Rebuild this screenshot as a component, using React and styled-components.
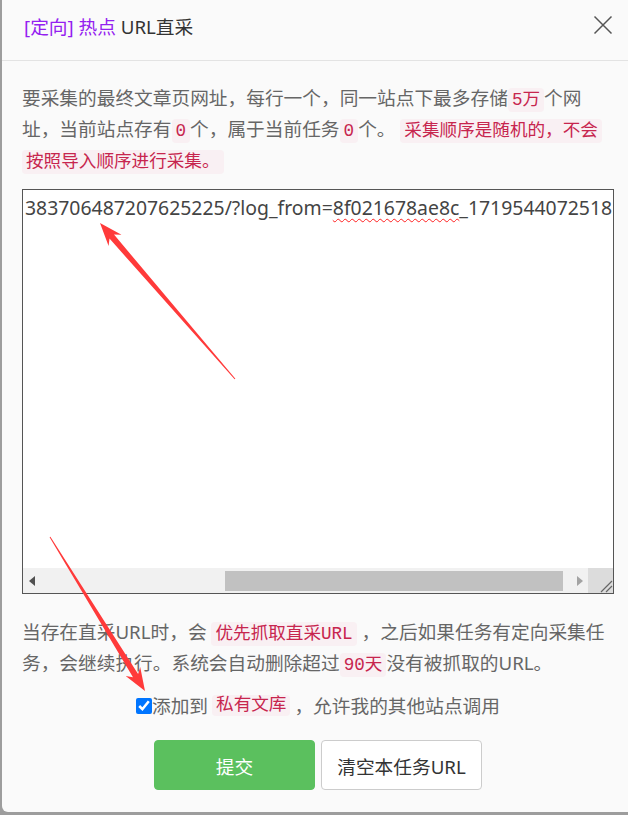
import React from "react";
import styled, { createGlobalStyle } from "styled-components";

const Global = createGlobalStyle`
  html, body {
    margin: 0;
    padding: 0;
    overflow: hidden;
    background: #9a9a9a;
  }
`;

const Page = styled.div`
  position: relative;
  width: 628px;
  height: 815px;
  overflow: hidden;
  padding-left: 2px;
  box-sizing: border-box;
  background: #9d9d9d;
  font-family: "Noto Sans", "Noto Sans CJK SC", sans-serif;
`;

const Modal = styled.div`
  width: 632px;
  height: 812px;
  background: #fafafa;
  border-bottom-left-radius: 6px;
  display: flex;
  flex-direction: column;
`;

const Header = styled.div`
  height: 61px;
  box-sizing: border-box;
  flex: none;
  display: flex;
  align-items: flex-start;
  justify-content: space-between;
  padding: 14px 20px 0 22px;
  border-bottom: 1px solid #e3e3e3;
  font-size: 18.7px;
  line-height: 26px;
  color: #333;
  .tag {
    color: #9420f0;
  }
`;

const Close = styled.button`
  border: 0;
  background: none;
  padding: 0;
  width: 22px;
  height: 22px;
  cursor: pointer;
`;

const Body = styled.div`
  padding: 21px 20px 0 20px;
  display: flex;
  flex-direction: column;
`;

const Text = styled.p`
  margin: 0;
  font-size: 18.7px;
  line-height: 31px;
  color: #666;
  width: 592px;
`;

const Code = styled.code`
  font-family: "Liberation Mono", "Noto Sans CJK SC", monospace;
  font-size: 17.6px;
  line-height: 1;
  padding: 2px 4px;
  color: #c7254e;
  background: #f9f0f3;
  border-radius: 4px;
  -webkit-box-decoration-break: clone;
  box-decoration-break: clone;
`;

const Area = styled.div`
  margin-top: 14px;
  height: 405px;
  box-sizing: border-box;
  border: 1px solid #555;
  background: #fff;
  display: flex;
  flex-direction: column;
`;

const AreaText = styled.div`
  flex: 1;
  padding: 5px 2px;
  line-height: 26px;
  font-size: 19.4px;
  color: #444;
  white-space: nowrap;
  overflow: hidden;
  .typo {
    text-decoration: underline wavy #ff2020;
    text-decoration-thickness: 1px;
    text-underline-offset: 3px;
    text-decoration-skip-ink: none;
  }
`;

const ScrollBar = styled.div`
  height: 25px;
  flex: none;
  display: flex;
  align-items: center;
  background: #f1f1f1;
`;

const ScrollBtn = styled.div`
  width: 17px;
  height: 25px;
  display: flex;
  align-items: center;
  justify-content: center;
`;

const ThumbTrack = styled.div`
  flex: 1;
  height: 25px;
  display: flex;
  align-items: center;
`;

const Thumb = styled.div`
  margin-left: ${(p) => p.$offset}px;
  width: ${(p) => p.$size}px;
  height: 20px;
  background: #c1c1c1;
`;

const Corner = styled.div`
  width: 25px;
  height: 25px;
  background: #dcdcdc;
  display: flex;
  align-items: flex-end;
  justify-content: flex-end;
`;

const CheckRow = styled.label`
  margin-top: 12px;
  display: flex;
  align-items: center;
  justify-content: center;
  font-size: 18.7px;
  line-height: 31px;
  color: #666;
  input {
    width: 16px;
    height: 16px;
    margin: 0;
    accent-color: #0075ff;
  }
  ${Code} {
    margin: 0 4px;
  }
`;

const Buttons = styled.div`
  margin-top: 19px;
  display: flex;
  justify-content: center;
  gap: 6px;
`;

const Button = styled.button`
  width: 161px;
  height: 50px;
  border-radius: 4px;
  font-family: "Noto Sans", "Noto Sans CJK SC", sans-serif;
  font-size: 18.7px;
  cursor: pointer;
  border: 1px solid ${(p) => (p.$primary ? "#5bc05e" : "#cccccc")};
  background: ${(p) => (p.$primary ? "#5bc05e" : "#ffffff")};
  color: ${(p) => (p.$primary ? "#ffffff" : "#333333")};
`;

const Overlay = styled.svg`
  position: absolute;
  left: 0;
  top: 0;
  pointer-events: none;
`;

function arrowPoints(sx, sy, tx, ty) {
  const dx = tx - sx;
  const dy = ty - sy;
  const len = Math.hypot(dx, dy);
  const ux = dx / len;
  const uy = dy / len;
  const nx = -uy;
  const ny = ux;
  const L = 23;
  const W = 8.5;
  const w = 3;
  const t = 0.5;
  const bx = tx - ux * L;
  const by = ty - uy * L;
  const jx = bx + ux * 5;
  const jy = by + uy * 5;
  return [
    [sx + nx * t, sy + ny * t],
    [jx + nx * w, jy + ny * w],
    [bx + nx * W, by + ny * W],
    [tx, ty],
    [bx - nx * W, by - ny * W],
    [jx - nx * w, jy - ny * w],
    [sx - nx * t, sy - ny * t],
  ]
    .map((p) => p.map((v) => v.toFixed(1)).join(","))
    .join(" ");
}

const arrows = [
  { from: [235, 379], to: [100, 223] },
  { from: [50, 537], to: [145, 691] },
];

export default function App() {
  return (
    <>
      <Global />
      <Page>
        <Modal>
          <Header>
            <span>
              <span className="tag">[定向] 热点</span> URL直采
            </span>
            <Close aria-label="关闭">
              <svg width="22" height="22" viewBox="0 0 22 22">
                <path d="M2.5 2.5L19.5 19.5M19.5 2.5L2.5 19.5" stroke="#555" strokeWidth="1.5" />
              </svg>
            </Close>
          </Header>
          <Body>
            <Text>
              要采集的最终文章页网址，每行一个，同一站点下最多存储<Code>5万</Code>个网址，当前站点存有<Code>0</Code>个，属于当前任务<Code>0</Code>个。 <Code>采集顺序是随机的，不会按照导入顺序进行采集。</Code>
            </Text>
            <Area>
              <AreaText>
                383706487207625225/?log_from=<span className="typo">8f021678ae8c</span>_1719544072518
              </AreaText>
              <ScrollBar>
                <ScrollBtn>
                  <svg width="6" height="10" viewBox="0 0 6 10">
                    <path d="M6 0L0 5L6 10Z" fill="#505050" />
                  </svg>
                </ScrollBtn>
                <ThumbTrack>
                  <Thumb $offset={185} $size={338} />
                </ThumbTrack>
                <ScrollBtn>
                  <svg width="6" height="10" viewBox="0 0 6 10">
                    <path d="M0 0L6 5L0 10Z" fill="#a3a3a3" />
                  </svg>
                </ScrollBtn>
                <Corner>
                  <svg width="14" height="14" viewBox="0 0 14 14">
                    <path d="M2 13L13 2M7 13L13 7" stroke="#666" strokeWidth="1.2" />
                  </svg>
                </Corner>
              </ScrollBar>
            </Area>
            <Text style={{ marginTop: 22 }}>
              当存在直采URL时，会 <Code>优先抓取直采URL</Code> ，之后如果任务有定向采集任务，会继续执行。系统会自动删除超过<Code>90天</Code>没有被抓取的URL。
            </Text>
            <CheckRow>
              <input type="checkbox" defaultChecked />
              添加到<Code>私有文库</Code>，允许我的其他站点调用
            </CheckRow>
            <Buttons>
              <Button $primary>提交</Button>
              <Button>清空本任务URL</Button>
            </Buttons>
          </Body>
        </Modal>
        <Overlay width="628" height="815" viewBox="0 0 628 815">
          {arrows.map((a, i) => (
            <polygon key={i} points={arrowPoints(a.from[0], a.from[1], a.to[0], a.to[1])} fill="#ff3a3a" />
          ))}
        </Overlay>
      </Page>
    </>
  );
}
